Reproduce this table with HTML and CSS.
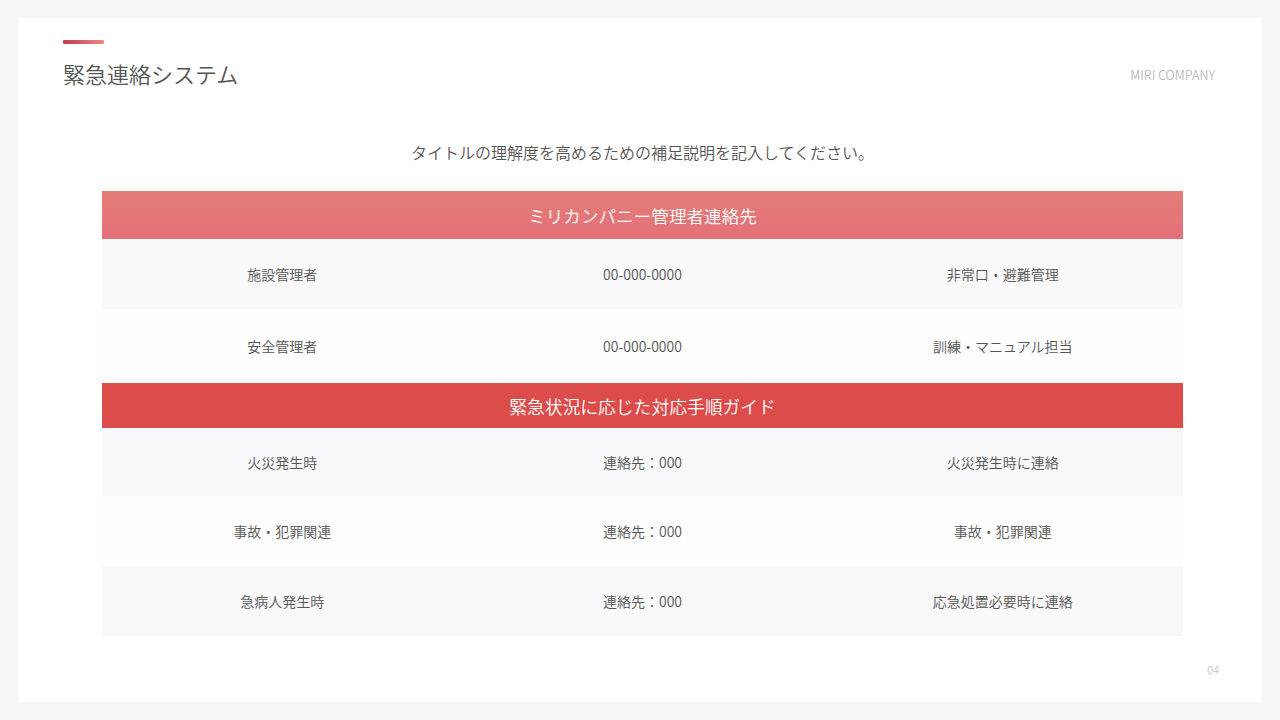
FILE: index.html
```html
<!DOCTYPE html>
<html lang="ja">
<head>
<meta charset="utf-8">
<link rel="stylesheet" href="styles.css">
</head>
<body>
<div class="card">
  <header class="head">
    <div class="head-left">
      <div class="accent"></div>
      <h1 class="title">緊急連絡システム</h1>
    </div>
    <div class="company">MIRI COMPANY</div>
  </header>
  <p class="lead">タイトルの理解度を高めるための補足説明を記入してください。</p>
  <div class="table">
    <div class="thead thead-a">ミリカンパニー管理者連絡先</div>
    <div class="row row-grey row-a1"><span>施設管理者</span><span>00-000-0000</span><span>非常口・避難管理</span></div>
    <div class="row row-white row-a2"><span>安全管理者</span><span>00-000-0000</span><span>訓練・マニュアル担当</span></div>
    <div class="thead thead-b">緊急状況に応じた対応手順ガイド</div>
    <div class="row row-tint row-b1"><span>火災発生時</span><span>連絡先：000</span><span>火災発生時に連絡</span></div>
    <div class="row row-white row-b2"><span>事故・犯罪関連</span><span>連絡先：000</span><span>事故・犯罪関連</span></div>
    <div class="row row-tint row-b3"><span>急病人発生時</span><span>連絡先：000</span><span>応急処置必要時に連絡</span></div>
  </div>
  <div class="pageno">04</div>
</div>
</body>
</html>
```
FILE: styles.css
```css
* { box-sizing: border-box; margin: 0; padding: 0; }
html, body { width: 1280px; height: 720px; overflow: hidden; }
body {
  background: #f6f6f6;
  font-family: "Noto Sans CJK JP", "Noto Sans", sans-serif;
  font-weight: 350;
  color: #555;
  padding: 18px;
}
.card {
  width: 1244px;
  height: 684px;
  background: #fff;
  border-radius: 3px;
  padding: 22px 45px 0 45px;
  display: flex;
  flex-direction: column;
}
.head {
  display: flex;
  justify-content: space-between;
  align-items: flex-start;
}
.accent {
  width: 41px;
  height: 4px;
  background: linear-gradient(90deg, #c23a4a, #ea8a84);
  border-radius: 1px;
}
.title {
  margin-top: 13px;
  font-size: 22px;
  line-height: 32px;
  font-weight: 350;
  color: #555;
}
.company {
  margin-top: 26px;
  margin-right: 2px;
  font-size: 12.5px;
  line-height: 18px;
  color: #bbb;
}
.lead {
  margin-top: 51px;
  text-align: center;
  font-size: 16px;
  line-height: 24px;
  color: #555;
  padding-left: 5px;
}
.table {
  margin: 27px 34px 0 39px;
  display: flex;
  flex-direction: column;
}
.thead {
  color: #fff;
  font-size: 17.6px;
  display: flex;
  align-items: center;
  justify-content: center;
}
.thead-a { height: 48px; background: linear-gradient(180deg, #e47d76, #e47079); }
.thead-b { height: 45px; background: #db4c4b; font-size: 17.8px; }
.row {
  display: grid;
  grid-template-columns: 1fr 1fr 1fr;
  align-items: center;
  font-size: 14px;
  color: #555;
}
.row span { text-align: center; }
.row-grey { background: #f9f9f9; }
.row-white { background: #fefefe; }
.row-tint { background: #f9f8fa; }
.row-a1 { height: 70px; }
.row-a2 { height: 74px; }
.row-b1 { height: 68px; }
.row-b2 { height: 70px; }
.row-b3 { height: 70px; }
.pageno {
  margin-top: 25px;
  align-self: flex-end;
  margin-right: -2px;
  font-size: 11px;
  color: #c8c8c8;
}
```
